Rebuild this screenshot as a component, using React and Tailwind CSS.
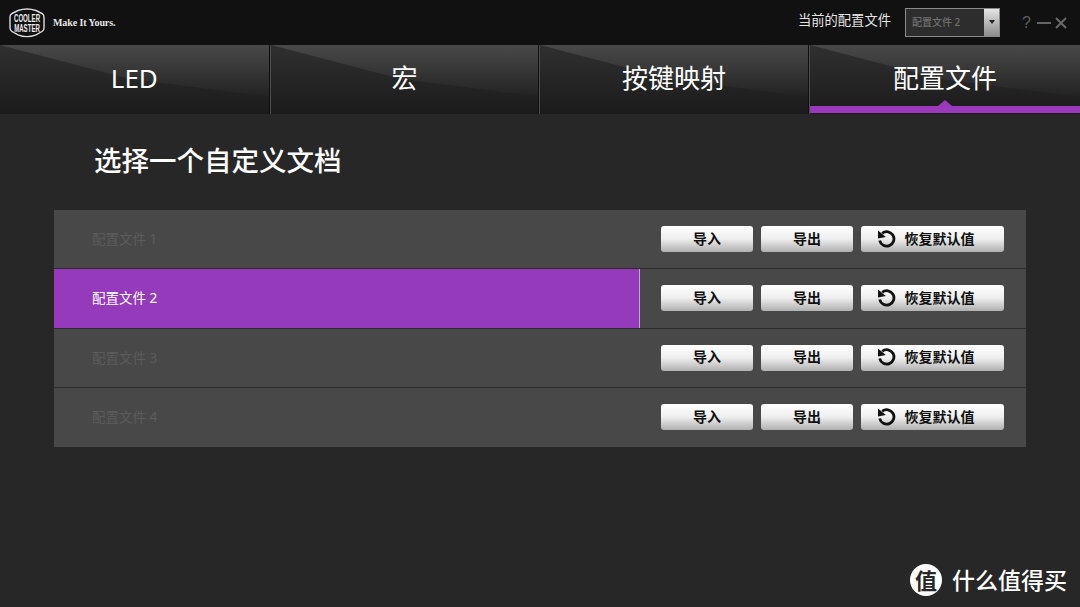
import React from "react";

const tabs = ["LED", "宏", "按键映射", "配置文件"];
const profiles = ["配置文件 1", "配置文件 2", "配置文件 3", "配置文件 4"];

function Logo() {
  return (
    <svg width="36" height="30" viewBox="0 0 36 30" className="shrink-0">
      <path d="M9 2.5 Q18 -0.5 27 2.5 L33 5.5 Q35 6.5 35 9 L35 20 Q35 22.5 33 23.5 L27 26.8 Q18 30.5 9 26.8 L3 23.5 Q1 22.5 1 20 L1 9 Q1 6.5 3 5.5 Z" fill="none" stroke="#dcdcdc" strokeWidth="1.4" />
      <text transform="translate(18 13.6) scale(0.58 1)" textAnchor="middle" fontSize="10.5" fontWeight="700" fill="#ececec" fontFamily="'Liberation Sans',sans-serif">COOLER</text>
      <text transform="translate(18 23.8) scale(0.58 1)" textAnchor="middle" fontSize="10.5" fontWeight="700" fill="#ececec" fontFamily="'Liberation Sans',sans-serif">MASTER</text>
    </svg>
  );
}

function ResetIcon() {
  return (
    <svg width="19" height="19" viewBox="0 0 19 19" className="mr-[9px] shrink-0">
      <path d="M5.2 4.3 A7.2 7.2 0 1 1 2.7 11.5" fill="none" stroke="#111111" strokeWidth="2.8" />
      <path d="M1 1.5 L1 9.5 L8.8 8 Z" fill="#111111" />
    </svg>
  );
}

function TopBar() {
  return (
    <div className="h-[45px] bg-[#111111] flex items-center pl-[9px] pr-[13px]">
      <Logo />
      <span className="ml-[8px] text-[10px] font-bold tracking-[-0.1px] text-[#e6e6e6] font-['Liberation_Serif',serif]">Make It Yours.</span>
      <span className="ml-auto mr-[14px] mb-[3px] text-[13.3px] text-[#e4e4e4]">当前的配置文件</span>
      <div className="w-[95px] h-[29px] mb-[1px] border border-[#8a8a8a] bg-[#2d2d2d] flex items-stretch">
        <span className="flex-1 pl-[6px] text-[10px] font-medium leading-[27px] text-[#6f6f6f]">配置文件 2</span>
        <span className="w-[15px] bg-gradient-to-b from-[#e6e6e6] to-[#8c8c8c] flex items-center justify-center">
          <span className="w-0 h-0 border-l-[3px] border-r-[3px] border-t-[4px] border-l-transparent border-r-transparent border-t-[#222222]" />
        </span>
      </div>
      <span className="ml-[22px] w-[9px] text-[16px] leading-none text-[#5f5f5f] font-['Liberation_Sans',sans-serif]">?</span>
      <span className="ml-[6px] w-[14px] h-[2px] bg-[#666666]" />
      <svg width="12" height="12" viewBox="0 0 12 12" className="ml-[4px]">
        <path d="M1 1 L11 11 M11 1 L1 11" stroke="#6a6a6a" strokeWidth="2" />
      </svg>
    </div>
  );
}

function Tab({ label, active }) {
  return (
    <div className="relative w-[269.6px] last:flex-1 border-r border-r-[#101010] border-l border-l-[#4c4c4c] first:border-l-0 last:border-r-0 bg-gradient-to-b from-[#303030] to-[#1b1b1b] flex items-center justify-center overflow-hidden">
      {/* gloss wedge across the top of the tab */}
      <svg className="absolute left-0 top-0" width="272" height="69" viewBox="0 0 272 69">
        <defs>
          <linearGradient id="tabGloss" x1="0" y1="0" x2="0" y2="1">
            <stop offset="0" stopColor="#ffffff" stopOpacity="0.12" />
            <stop offset="1" stopColor="#ffffff" stopOpacity="0.01" />
          </linearGradient>
        </defs>
        <path d="M0 0 L272 0 L272 52 L130 34 Z" fill="url(#tabGloss)" />
      </svg>
      <span className="relative text-[26px] text-white mb-[2px]">{label}</span>
      {active && (
        <div className="absolute left-0 right-0 bottom-[1px] h-[7px] bg-[#9b39bb]">
          <div className="absolute left-1/2 -translate-x-1/2 -top-[6px] w-0 h-0 border-l-[7px] border-r-[7px] border-b-[6px] border-l-transparent border-r-transparent border-b-[#9b39bb]" />
        </div>
      )}
    </div>
  );
}

function ActionButton({ width, children, className = "" }) {
  return (
    <button className={`${width} ${className} h-[26px] pb-[2px] rounded-[3px] bg-gradient-to-b from-[#ffffff] via-[#eeeeee] to-[#b0b0b0] flex items-center justify-center text-[14px] font-bold text-[#111111]`}>
      {children}
    </button>
  );
}

function ProfileRow({ name, active }) {
  return (
    <div className="h-[59.25px] flex items-stretch bg-[#484848] border-b border-b-[#2b2b2b] last:border-b-0">
      <div className={`w-[586px] pl-[38px] flex items-center text-[13.5px] ${active ? "bg-[#963abc] text-white border-r border-r-[#c9a3d8]" : "text-[#5c5c5c]"}`}>
        {name}
      </div>
      <div className="flex-1 flex items-center gap-[8px] pl-[21px]">
        <ActionButton width="w-[92px]">导入</ActionButton>
        <ActionButton width="w-[92px]">导出</ActionButton>
        <ActionButton width="w-[143px]" className="pr-[14px]">
          <ResetIcon />
          恢复默认值
        </ActionButton>
      </div>
    </div>
  );
}

export default function App() {
  return (
    <div className="relative w-[1080px] h-[607px] overflow-hidden flex flex-col bg-[#272727] font-['Noto_Sans','Noto_Sans_CJK_SC',sans-serif]">
      <TopBar />
      <div className="h-[69px] flex">
        {tabs.map((t, i) => (
          <Tab key={t} label={t} active={i === 3} />
        ))}
      </div>
      <h1 className="mt-[28px] ml-[94px] text-[27.5px] leading-[38px] font-medium text-white">选择一个自定义文档</h1>
      <div className="mt-[30px] mx-[54px]">
        {profiles.map((p, i) => (
          <ProfileRow key={p} name={p} active={i === 1} />
        ))}
      </div>
      <div className="absolute right-[13px] bottom-[11px] flex items-center gap-[10px]">
        <span className="w-[32px] h-[32px] rounded-full bg-white flex items-center justify-center text-[22px] font-bold leading-none text-[#272727]">值</span>
        <span className="text-[23px] leading-none text-white font-medium">什么值得买</span>
      </div>
    </div>
  );
}
